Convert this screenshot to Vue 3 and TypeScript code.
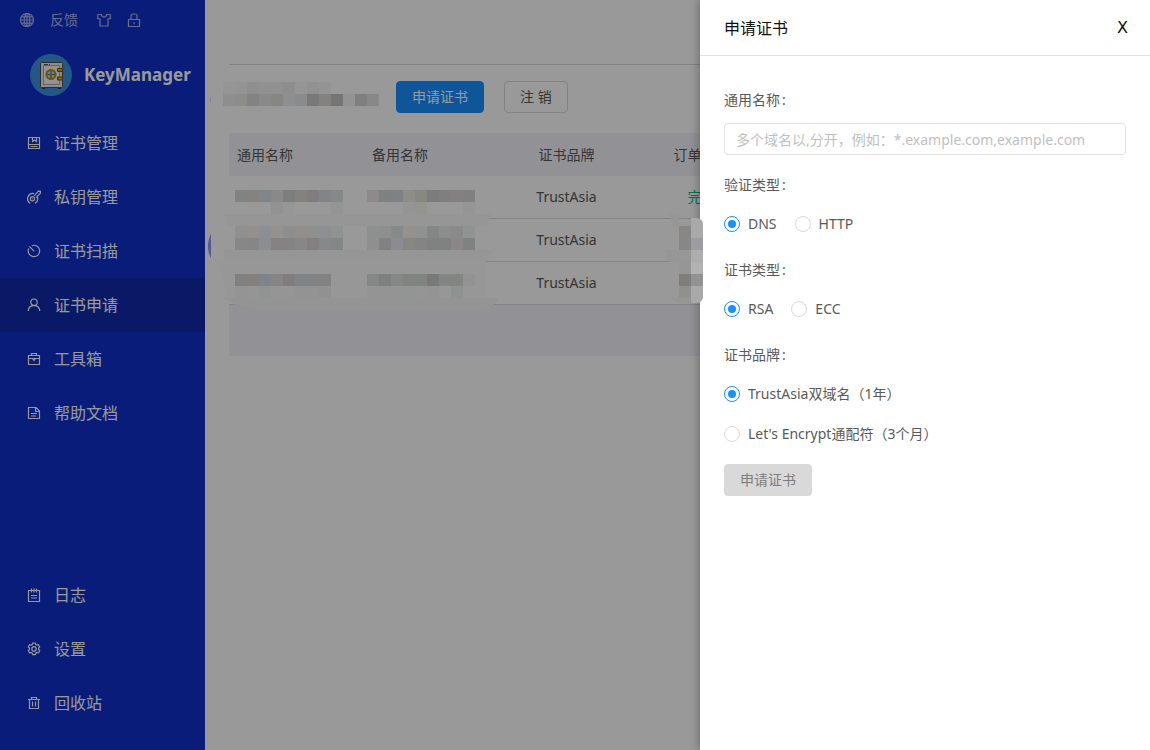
<script setup lang="ts">
import { ref } from 'vue'

interface MenuItem {
  label: string
  icon: string
  active?: boolean
}

interface Order {
  brand: string
  status: string
}

interface Strip {
  x: number
  y: number
  cells: string[]
}

const mainMenu: MenuItem[] = [
  { label: '证书管理', icon: 'cert' },
  { label: '私钥管理', icon: 'key' },
  { label: '证书扫描', icon: 'scan' },
  { label: '证书申请', icon: 'user', active: true },
  { label: '工具箱', icon: 'toolbox' },
  { label: '帮助文档', icon: 'doc' },
]

const bottomMenu: MenuItem[] = [
  { label: '日志', icon: 'log' },
  { label: '设置', icon: 'gear' },
  { label: '回收站', icon: 'trash' },
]

const icons: Record<string, string> = {
  cert: 'M1.5 1.5h11v11h-11z M5.5 1.5v4l2-1.5 2 1.500v-4 M1.500 8.500h11 M3.500 10.500h7',
  key: 'M3.200 13.200a5.200 5.200 0 0 1 4-9.500 M10.400 7a5.200 5.200 0 0 1-2.400 6.200 M7.600 8.800a2.100 2.100 0 1 1-4.200 0a2.100 2.100 0 1 1 4.200 0z M7.200 5.800L11.400 1.200l2 .200v1.800L9 7.600 M5.200 8.800h.6',
  scan: 'M4.800 1.700A5.700 5.700 0 1 1 1.800 4.600 M2.400 2.400L7.200 7.400',
  user: 'M10.200 4.200a3.200 3.200 0 1 1-6.400 0a3.200 3.200 0 1 1 6.400 0z M1.200 13c.2-3.200 2.400-5.400 5.800-5.400s5.600 2.200 5.800 5.400',
  toolbox: 'M1.500 3.500h11v9h-11z M4.500 3.500v-2h5v2 M2 6.500h10 M5.500 6.500l1.500 2 1.500-2',
  doc: 'M1.500 1.500h7.500l3.500 3.500v7.500h-11z M8.500 1.500v4h4 M4 7.500h6 M4 10h5',
  log: 'M1.500 2.500h11v11h-11z M4.500 0.500v4 M7 0.500v4 M9.500 0.500v4 M4 7.500h6 M4 10h6',
  gear: 'M5.700 1h2.600l.4 1.500 1.100.6 1.600-.5 1.300 2.200-1.100 1.200v1.500l1.100 1.200-1.300 2.300-1.600-.5-1.100.700-.4 1.500H5.700l-.4-1.500-1.100-.7-1.600.5-1.300-2.300 1.100-1.200V6L1.300 4.800l1.300-2.200 1.600.5 1.100-.6z M9.200 6.900a2.200 2.200 0 1 1-4.400 0a2.200 2.200 0 1 1 4.400 0z',
  trash: 'M1 3.500h12 M4.500 3.500v-2h5v2 M2.500 3.500v9h9v-9 M5.500 5.500v5 M8.500 5.500v5',
}

const orders: Order[] = [
  { brand: 'TrustAsia', status: '完成' },
  { brand: 'TrustAsia', status: '' },
  { brand: 'TrustAsia', status: '' },
]

const cell = 12
const strips: Strip[] = [
  { x: 223, y: 82, cells: ['#959595', '#949494', '#8f8f8f', '#919191', '#919191', '#8e8e8e', '#959595', '#919191', '#949494'] },
  { x: 223, y: 94, cells: ['#8e8e8e', '#8d8c88', '#838383', '#898989', '#868683', '#8e8f90', '#8a8b8c', '#7b7977', '#838281', '#777574', '#939393', '#7f7f7f', '#888888'] },
  { x: 235, y: 190, cells: ['#818282', '#85827f', '#80878b', '#898986', '#7c7e7d', '#84817e', '#807c7f', '#828588', '#858a89'] },
  { x: 367, y: 190, cells: ['#8d8a87', '#7d8280', '#7e8285', '#8f8d88', '#888883', '#7b7c7b', '#807f7e', '#83807e', '#7d8280'] },
  { x: 271, y: 202, cells: ['#929292', '#969696'] },
  { x: 331, y: 202, cells: ['#949494'] },
  { x: 403, y: 202, cells: ['#959595', '#949491'] },
  { x: 463, y: 202, cells: ['#959595'] },
  { x: 235, y: 226, cells: ['#8f908f', '#93908d', '#8c8f93', '#94928e', '#8d8f8e', '#918e8b', '#8e8f8f', '#8d9092', '#8f9391'] },
  { x: 235, y: 238, cells: ['#868786', '#868686', '#8b8d91', '#868283', '#838382', '#898784', '#857f82', '#868889', '#838785'] },
  { x: 367, y: 226, cells: ['#8e8f8f', '#8d8e8d', '#868a88', '#96918d', '#8e9290', '#858686', '#8d8d8d', '#898a89', '#909493'] },
  { x: 367, y: 238, cells: ['#8f8f8f', '#818283', '#898c90', '#868685', '#848581', '#7f8280', '#808281', '#8a8784', '#7e8280'] },
  { x: 235, y: 274, cells: ['#7f807f', '#83807d', '#80848a', '#858585', '#817c7e', '#7f8287', '#818281', '#818281'] },
  { x: 235, y: 286, cells: ['#949494', '#959595', '#919292', '#949594', '#959592', '#929492', '#939393', '#8e9290'] },
  { x: 367, y: 274, cells: ['#858787', '#7e7f7f', '#858686', '#7f8481', '#7f8481', '#787978', '#838484', '#838583', '#929292'] },
  { x: 367, y: 286, cells: ['#949494', '#949494', '#939494', '#929594', '#949594', '#939594', '#979797', '#8e9290', '#979797'] },
  { x: 679, y: 226, cells: ['#888786', '#aaaaaa'] },
  { x: 679, y: 238, cells: ['#888786', '#9d9da1'] },
  { x: 679, y: 250, cells: ['#979797', '#adadad'] },
  { x: 679, y: 262, cells: ['#969696', '#b2b2b2'] },
  { x: 679, y: 274, cells: ['#7f7e7c', '#929293'] },
  { x: 679, y: 286, cells: ['#91908d', '#a9a9a9'] },
]

const domains = ref('')
const verifyType = ref('DNS')
const certType = ref('RSA')
const brand = ref('trustasia')
</script>

<template>
  <div class="app">
    <aside class="sidebar">
      <div class="quick">
        <button type="button" class="quick-btn" aria-label="语言">
          <svg width="14" height="14" viewBox="0 0 14 14">
            <path d="M13.500 7a6.500 6.500 0 1 1-13 0a6.500 6.500 0 1 1 13 0z M9.800 7c0 3.600-1.200 6.500-2.800 6.500S4.200 10.600 4.200 7 5.400.5 7 .5 9.800 3.400 9.800 7z M7 .5v13 M.5 7h13 M1.500 3.800h11 M1.500 10.200h11" />
          </svg>
        </button>
        <a href="#" class="feedback">反馈</a>
        <button type="button" class="quick-btn" aria-label="主题">
          <svg width="14" height="14" viewBox="0 0 14 14">
            <path d="M4.500 1.500H1L.6 5.500l2.400.5v7h8V6l2.400-.5L13 1.500H9.500C9.500 3 8.500 4 7 4S4.500 3 4.500 1.500z" />
          </svg>
        </button>
        <button type="button" class="quick-btn" aria-label="锁定">
          <svg width="14" height="14" viewBox="0 0 14 14">
            <path d="M1.500 6.500h11v7h-11z M4 6.500v-3.500a2 2 0 0 1 2-2h2a2 2 0 0 1 2 2v3.500 M7 9v2.200" />
          </svg>
        </button>
      </div>

      <div class="brand">
        <svg class="logo" width="42" height="42" viewBox="0 0 42 42">
          <circle cx="21" cy="21" r="21" fill="#3d8fdf" />
          <path d="M12 33h3v2h-3z M28 33h3v2h-3z" fill="#333" />
          <rect x="10.500" y="8.500" width="22" height="25" rx="1" fill="#eceae6" stroke="#4a4a55" />
          <rect x="13.500" y="11.500" width="16" height="19" fill="#f6f4f0" stroke="#a9a7a5" />
          <path d="M14 10.500h4 M19 10.500h1" stroke="#555" fill="none" />
          <circle cx="21" cy="20.500" r="4.500" fill="#cfd6dc" stroke="#b18d1a" stroke-width="2" />
          <path d="M21 17v7 M17.500 20.500h7" stroke="#3d4d55" />
          <circle cx="21" cy="20.500" r="1.500" fill="#5ba7a0" />
          <path d="M27.500 14.500h5v3h-5z M27.500 23h5v3h-5z" fill="#d9ab16" stroke="#6b5412" />
        </svg>
        <span class="brand-name">KeyManager</span>
      </div>

      <nav class="menu">
        <a v-for="item in mainMenu" :key="item.label" href="#" class="menu-item" :class="{ active: item.active }">
          <svg width="14" height="14" viewBox="0 0 14 14"><path :d="icons[item.icon]" /></svg>
          <span>{{ item.label }}</span>
        </a>
      </nav>
      <nav class="menu menu-bottom">
        <a v-for="item in bottomMenu" :key="item.label" href="#" class="menu-item">
          <svg width="14" height="14" viewBox="0 0 14 14"><path :d="icons[item.icon]" /></svg>
          <span>{{ item.label }}</span>
        </a>
      </nav>
    </aside>

    <main class="content">
      <div class="toolbar">
        <button type="button" class="btn btn-primary">申请证书</button>
        <button type="button" class="btn">注 销</button>
      </div>
      <table class="orders">
        <colgroup>
          <col class="col" />
          <col class="col" />
          <col class="col" />
          <col class="col" />
          <col />
        </colgroup>
        <thead>
          <tr>
            <th>通用名称</th>
            <th>备用名称</th>
            <th class="center">证书品牌</th>
            <th class="center">订单状态</th>
            <th></th>
          </tr>
        </thead>
        <tbody>
          <tr v-for="(order, i) in orders" :key="i">
            <td></td>
            <td></td>
            <td class="center">{{ order.brand }}</td>
            <td class="center done">{{ order.status }}</td>
            <td></td>
          </tr>
        </tbody>
      </table>
      <div class="table-foot"></div>
    </main>

    <div class="mask"></div>

    <section class="drawer" role="dialog" aria-labelledby="drawer-title">
      <header class="drawer-head">
        <h2 id="drawer-title">申请证书</h2>
        <button type="button" class="close" aria-label="关闭">X</button>
      </header>
      <form class="form" @submit.prevent>
        <div class="field">
          <label class="field-label" for="domains">通用名称<i>:</i></label>
          <input id="domains" v-model="domains" class="text" type="text" placeholder="多个域名以,分开，例如：*.example.com,example.com" />
        </div>
        <div class="field" role="radiogroup" aria-labelledby="verify-label">
          <span id="verify-label" class="field-label">验证类型<i>:</i></span>
          <div class="options">
            <label class="option"><input v-model="verifyType" type="radio" name="verify" value="DNS" /><span>DNS</span></label>
            <label class="option"><input v-model="verifyType" type="radio" name="verify" value="HTTP" /><span>HTTP</span></label>
          </div>
        </div>
        <div class="field" role="radiogroup" aria-labelledby="cert-label">
          <span id="cert-label" class="field-label">证书类型<i>:</i></span>
          <div class="options">
            <label class="option"><input v-model="certType" type="radio" name="cert" value="RSA" /><span>RSA</span></label>
            <label class="option"><input v-model="certType" type="radio" name="cert" value="ECC" /><span>ECC</span></label>
          </div>
        </div>
        <div class="field" role="radiogroup" aria-labelledby="brand-label">
          <span id="brand-label" class="field-label">证书品牌<i>:</i></span>
          <div class="options stacked">
            <label class="option"><input v-model="brand" type="radio" name="brand" value="trustasia" /><span>TrustAsia双域名（1年）</span></label>
            <label class="option"><input v-model="brand" type="radio" name="brand" value="letsencrypt" /><span>Let's Encrypt通配符（3个月）</span></label>
          </div>
        </div>
        <button type="submit" class="btn btn-disabled" disabled>申请证书</button>
      </form>
    </section>

    <!-- Pixelated cover over private values -->
    <svg class="mosaic" width="704" height="360" viewBox="0 0 704 360" aria-hidden="true">
      <path d="M211 234c-4 6-4 18 0 24z" fill="#525b98" />
      <path d="M211 96c-2 3-2 5 0 7z" fill="#83849c" />
      <path d="M229 177h255l4 43H229z M229 220h257l-3 42H229z" fill="#999999" />
      <path d="M224 214h268l-6 12H228z M224 250h270l-8 12H224z" fill="#969696" />
      <path d="M219 262h268v36h12l-10 10H250l-22-8z" fill="#979797" />
      <path d="M223 298h276q-6 11-24 12H265q-30-2-42-12z" fill="#949495" />
      <path d="M669 214h10v12h-5z M664 250h15v12h-10z M669 298h22v5h-12z" fill="#969696" />
      <path d="M691 218h6q6 1 6 6v72q0 6-6 7h-6z" fill="#a9a9a9" />
      <g v-for="(strip, s) in strips" :key="s" shape-rendering="crispEdges">
        <rect
          v-for="(color, c) in strip.cells"
          :key="c"
          :x="strip.x + c * cell"
          :y="strip.y"
          :width="cell"
          :height="cell"
          :fill="color"
        />
      </g>
    </svg>
  </div>
</template>

<style>
body {
  margin: 0;
}
</style>

<style scoped>
.app {
  position: relative;
  display: flex;
  min-height: 100vh;
  overflow: hidden;
  background: #fff;
  color: #595959;
  font: 14px/22px "Noto Sans", "Noto Sans CJK SC", sans-serif;
}

.app *,
.app *::before {
  box-sizing: border-box;
}

button,
input {
  margin: 0;
  font: inherit;
  color: inherit;
}

.sidebar {
  display: flex;
  flex: none;
  flex-direction: column;
  width: 205px;
  padding-bottom: 20px;
  background: #0f2fcb;
  color: #fff;
}

.sidebar svg:not(.logo) {
  flex: none;
  fill: none;
  stroke: currentColor;
  stroke-width: 1.2;
}

.quick {
  display: flex;
  align-items: center;
  gap: 16px;
  height: 40px;
  padding-left: 20px;
  color: rgba(255, 255, 255, 0.65);
}

.quick-btn {
  display: flex;
  padding: 0;
  border: 0;
  background: none;
}

.feedback {
  padding-right: 3px;
  color: inherit;
  text-decoration: none;
}

.brand {
  display: flex;
  align-items: center;
  gap: 12px;
  height: 70px;
  margin-bottom: 6px;
  padding-left: 30px;
}

.brand-name {
  font-size: 17px;
  font-weight: 700;
}

.menu-item {
  display: flex;
  align-items: center;
  gap: 13px;
  height: 54px;
  padding-left: 27px;
  color: #fff;
  font-size: 16px;
  text-decoration: none;
}

.menu-item.active {
  background: #0f2baa;
}

.menu-bottom {
  margin-top: auto;
}

.content {
  flex: 1;
  min-width: 0;
  padding: 64px 24px 24px;
}

.toolbar {
  display: flex;
  gap: 20px;
  padding: 16px 0 20px 167px;
  border-top: 1px solid #d9d9d9;
}

.btn {
  height: 32px;
  padding: 0 15px;
  border: 1px solid #d9d9d9;
  border-radius: 4px;
  background: #fff;
  line-height: 30px;
}

.btn-primary {
  border-color: #1890ff;
  background: #1890ff;
  color: #fff;
}

.orders {
  width: 100%;
  border-collapse: separate;
  border-spacing: 0;
  table-layout: fixed;
}

.col {
  width: 135px;
}

.orders th,
.orders td {
  height: 43px;
  padding: 0 8px;
  font-weight: 400;
  text-align: left;
}

.orders th {
  background: #f4f4fb;
}

.orders th:first-child {
  border-top-left-radius: 4px;
}

.orders td {
  border-bottom: 1px solid #dadada;
}

.orders .center {
  text-align: center;
}

.orders .done {
  color: #00c08b;
}

.table-foot {
  height: 51px;
  background: #f4f4fb;
}

.mask {
  position: absolute;
  inset: 0;
  background: rgba(0, 0, 0, 0.4);
}

.drawer {
  position: absolute;
  top: 0;
  right: 0;
  bottom: 0;
  width: 450px;
  background: #fff;
  box-shadow: -2px 0 8px rgba(0, 0, 0, 0.25);
}

.drawer-head {
  display: flex;
  align-items: center;
  justify-content: space-between;
  height: 56px;
  padding: 0 22px 0 24px;
  border-bottom: 1px solid #e2e2e2;
  color: #111;
}

.drawer-head h2 {
  margin: 0;
  font-size: 16px;
  font-weight: 400;
}

.close {
  padding: 0;
  border: 0;
  background: none;
  font: 16px/22px "DejaVu Sans", sans-serif;
}

.form {
  padding: 24px;
}

.field {
  margin-bottom: 10px;
}

.field-label {
  display: block;
  margin-bottom: 3px;
  line-height: 40px;
}

.field-label i {
  margin-left: 2px;
  font-style: normal;
}

.text {
  display: block;
  width: 100%;
  height: 32px;
  padding: 0 11px;
  border: 1px solid #e0e0e0;
  border-radius: 4px;
  outline: 0;
}

.text::placeholder {
  color: #bfbfbf;
  opacity: 1;
}

.options {
  display: flex;
  gap: 18px;
}

.stacked {
  flex-direction: column;
  gap: 8px;
  margin-bottom: 14px;
}

.option {
  display: flex;
  align-items: center;
  gap: 8px;
  height: 32px;
}

.option input {
  display: grid;
  place-items: center;
  width: 16px;
  height: 16px;
  border: 1px solid #d9d9d9;
  border-radius: 50%;
  background: #fff;
  appearance: none;
}

.option input:checked {
  border-color: #1890ff;
}

.option input:checked::before {
  width: 8px;
  height: 8px;
  border-radius: 50%;
  background: #1890ff;
  content: "";
}

.btn-disabled {
  border-color: #d9d9d9;
  background: #d9d9d9;
  color: #7d7d7d;
}

.mosaic {
  position: absolute;
  top: 0;
  left: 0;
  pointer-events: none;
}
</style>
